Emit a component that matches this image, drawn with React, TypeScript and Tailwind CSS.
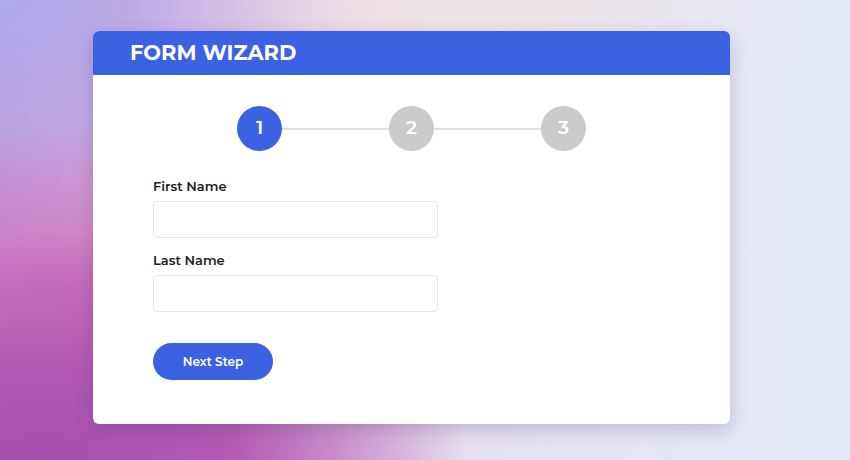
import { useState } from "react";

const steps = [1, 2, 3];

export default function App() {
  const [first, setFirst] = useState("");
  const [last, setLast] = useState("");
  const current = 1;

  return (
    <div
      className="relative h-[460px] w-[850px] overflow-hidden bg-[radial-gradient(ellipse_50%_50%_at_5%_100%,#a64fae_0%,#b45ab5_45%,transparent_100%),radial-gradient(ellipse_30%_40%_at_8%_66%,#d272ba_0%,transparent_100%),radial-gradient(ellipse_40%_55%_at_0%_0%,#aea8ec_0%,transparent_100%),radial-gradient(ellipse_40%_30%_at_55%_0%,#efe4e4_0%,transparent_100%),linear-gradient(to_right,#c59ad8_0%,#e4c6e2_30%,#e6e0f0_55%,#e6e6f4_75%,#e3eaf7_100%)] pt-[31px] pl-[93px] font-['Montserrat','Noto_Sans',sans-serif]"
    >
      <div className="w-[637px] overflow-hidden rounded-md bg-white shadow-[0_6px_18px_rgba(60,40,90,0.22)]">
        <div className="flex h-[44px] items-center bg-[#3a62e3] pl-[37px]">
          <h1 className="text-[21px] font-bold text-white">FORM WIZARD</h1>
        </div>

        <div className="px-[60px] pt-[31px] pb-[44px]">
          <div className="flex items-center justify-center">
            {steps.map((n, i) => (
              <div className="flex items-center" key={n}>
                {i > 0 && <div className="h-[2px] w-[107px] bg-[#e2e2e2]" />}
                <div
                  className={`flex size-[45px] items-center justify-center rounded-full text-[19px] font-semibold text-white ${
                    n === current ? "bg-[#3a62e3]" : "bg-[#cbcbcb]"
                  }`}
                >
                  {n}
                </div>
              </div>
            ))}
          </div>

          <form className="mt-[26px] flex flex-col" onSubmit={(e) => e.preventDefault()}>
            <label className="text-[13px] font-semibold text-[#222]" htmlFor="first">
              First Name
            </label>
            <input
              className="mt-[4px] h-[37px] w-[285px] rounded border border-[#e6e6e6] px-3 text-sm outline-none"
              id="first"
              onChange={(e) => setFirst(e.target.value)}
              value={first}
            />
            <label className="mt-[13px] text-[13px] font-semibold text-[#222]" htmlFor="last">
              Last Name
            </label>
            <input
              className="mt-[5px] h-[37px] w-[285px] rounded border border-[#e6e6e6] px-3 text-sm outline-none"
              id="last"
              onChange={(e) => setLast(e.target.value)}
              value={last}
            />
            <button
              className="mt-[31px] h-[37px] w-[120px] rounded-full bg-[#3a62e3] text-[12px] font-semibold text-white"
              type="submit"
            >
              Next Step
            </button>
          </form>
        </div>
      </div>
    </div>
  );
}
